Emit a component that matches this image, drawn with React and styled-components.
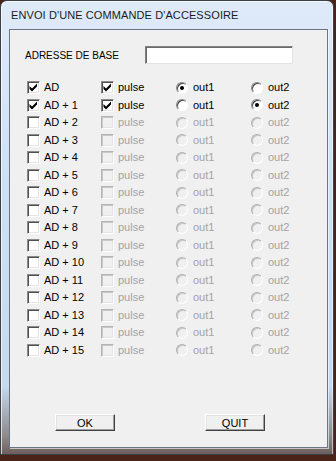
import React from "react";
import styled, { createGlobalStyle } from "styled-components";

const GlobalStyle = createGlobalStyle`
  html, body {
    margin: 0;
    padding: 0;
    background: #4a2418;
  }
  body {
    font-family: "Liberation Sans", Arial, sans-serif;
  }
`;

const rows = Array.from({ length: 16 }, (_, i) => ({
  label: i === 0 ? "AD" : `AD + ${i}`,
  active: i < 2,
  out: i === 0 ? 1 : i === 1 ? 2 : 0,
}));

export default function App() {
  return (
    <>
      <GlobalStyle />
      <Desktop>
        <Window>
          <TitleBar>ENVOI D'UNE COMMANDE D'ACCESSOIRE</TitleBar>
          <Client>
            <AddressRow>
              <Label small>ADRESSE DE BASE</Label>
              <TextInput />
            </AddressRow>

            <Grid>
              {rows.map((row) => (
                <React.Fragment key={row.label}>
                  <Option>
                    <CheckBox checked={row.active} />
                    <Label>{row.label}</Label>
                  </Option>
                  <Option>
                    <CheckBox checked={row.active} disabled={!row.active} />
                    <Label disabled={!row.active}>pulse</Label>
                  </Option>
                  <Option>
                    <Radio selected={row.out === 1} disabled={!row.active} />
                    <Label disabled={!row.active}>out1</Label>
                  </Option>
                  <Option>
                    <Radio selected={row.out === 2} disabled={!row.active} />
                    <Label disabled={!row.active}>out2</Label>
                  </Option>
                </React.Fragment>
              ))}
            </Grid>

            <ButtonRow>
              <Button>OK</Button>
              <Button>QUIT</Button>
            </ButtonRow>
          </Client>
        </Window>
      </Desktop>
    </>
  );
}

function CheckBox({ checked, disabled }) {
  return (
    <Box disabled={disabled}>
      {checked && (
        <svg width="11" height="11" viewBox="1 1 11 11">
          <polygon
            points="2.5,5 5,7.5 10,2.5 10,5.5 5,10.5 2.5,8"
            fill={disabled ? "#a0a0a0" : "#000"}
          />
        </svg>
      )}
    </Box>
  );
}

function Radio({ selected, disabled }) {
  return (
    <RadioCircle disabled={disabled}>
      {selected && <Dot />}
    </RadioCircle>
  );
}

const Desktop = styled.div`
  width: 336px;
  height: 461px;
  overflow: hidden;
`;

const Window = styled.div`
  width: 332px;
  height: 453px;
  border: 1px solid #3c4148;
  border-radius: 7px 7px 0 0;
  background: linear-gradient(
    to bottom,
    #dfeaf9 0%,
    #cfe0f4 40%,
    #c6d9ef 85%,
    #8f8a8c 96%,
    #6e5f5e 100%
  );
  box-shadow: inset 1px 1px 0 rgba(255, 255, 255, 0.7),
    inset -1px 0 0 rgba(255, 255, 255, 0.5);
  display: flex;
  flex-direction: column;
`;

const TitleBar = styled.div`
  height: 28px;
  padding-left: 10px;
  display: flex;
  align-items: center;
  font-family: "Liberation Sans", Arial, sans-serif;
  font-size: 11px;
  letter-spacing: 0.1px;
  color: #1b1b1b;
  white-space: nowrap;
`;

const Client = styled.div`
  margin-left: 8px;
  width: 317px;
  height: 417px;
  border: 1px solid #6a7684;
  background: #f0f0f0;
  display: flex;
  flex-direction: column;
  box-shadow: 1px 1px 0 rgba(255, 255, 255, 0.6);
`;

const AddressRow = styled.div`
  margin-top: 16px;
  padding-left: 15px;
  display: flex;
  align-items: center;
  gap: 26px;
  height: 18px;
`;

const Label = styled.span`
  font-size: ${(p) => (p.small ? "10px" : "11px")};
  color: ${(p) => (p.disabled ? "#a3a3a3" : "#000")};
  white-space: nowrap;
  line-height: 13px;
`;

const TextInput = styled.div`
  width: 146px;
  height: 16px;
  background: #fff;
  border-top: 1px solid #808080;
  border-left: 1px solid #808080;
  border-right: 1px solid #e3e3e3;
  border-bottom: 1px solid #e3e3e3;
  box-shadow: inset 1px 1px 0 #6a6a6a;
`;

const Grid = styled.div`
  margin-top: 15px;
  padding-left: 17px;
  display: grid;
  grid-template-columns: 74px 75px 75px 1fr;
  grid-auto-rows: 17.5px;
`;

const Option = styled.div`
  display: flex;
  align-items: center;
  gap: 4px;
`;

const Box = styled.span`
  box-sizing: border-box;
  width: 13px;
  height: 13px;
  display: inline-flex;
  align-items: center;
  justify-content: center;
  background: ${(p) => (p.disabled ? "#f0f0f0" : "#fff")};
  border-top: 1px solid ${(p) => (p.disabled ? "#b4b4b4" : "#8a8a8a")};
  border-left: 1px solid ${(p) => (p.disabled ? "#b4b4b4" : "#8a8a8a")};
  border-right: 1px solid #ffffff;
  border-bottom: 1px solid #ffffff;
  box-shadow: inset 1px 1px 0 ${(p) => (p.disabled ? "#c8c8c8" : "#505050")},
    inset -1px -1px 0 #e4e4e4;
  flex-shrink: 0;
`;

const RadioCircle = styled.span`
  box-sizing: border-box;
  width: 12px;
  height: 12px;
  margin-right: 1px;
  border-radius: 50%;
  display: inline-flex;
  align-items: center;
  justify-content: center;
  background: ${(p) => (p.disabled ? "#f0f0f0" : "#fff")};
  border: 1px solid;
  border-color: ${(p) => (p.disabled ? "#b0b0b0" : "#888")} #fff #fff
    ${(p) => (p.disabled ? "#b0b0b0" : "#888")};
  box-shadow: inset 1px 1px 0 ${(p) => (p.disabled ? "#c8c8c8" : "#484848")};
  flex-shrink: 0;
`;

const Dot = styled.span`
  width: 4px;
  height: 4px;
  border-radius: 50%;
  background: #000;
`;

const ButtonRow = styled.div`
  margin-top: auto;
  margin-bottom: 16px;
  padding-left: 45px;
  display: flex;
  gap: 90px;
`;

const Button = styled.button`
  box-sizing: border-box;
  width: 60px;
  height: 17px;
  padding: 0;
  background: #f0f0f0;
  border-top: 1px solid #fff;
  border-left: 1px solid #fff;
  border-right: 1px solid #404040;
  border-bottom: 1px solid #404040;
  box-shadow: inset -1px -1px 0 #a0a0a0, inset 1px 1px 0 #e3e3e3;
  font-family: "Liberation Sans", Arial, sans-serif;
  font-size: 11px;
  color: #000;
`;
